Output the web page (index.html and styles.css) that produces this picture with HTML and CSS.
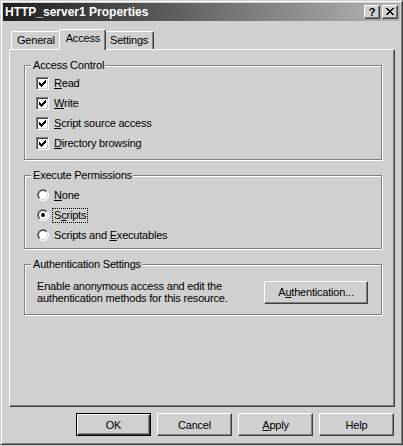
FILE: index.html
```html
<!DOCTYPE html>
<html>
<head>
<meta charset="utf-8">
<title>HTTP_server1 Properties</title>
<link rel="stylesheet" href="styles.css">
</head>
<body>
<div class="window">
  <div class="titlebar">
    <span class="title">HTTP_server1 Properties</span>
    <div class="tbtns">
      <span class="tbtn help">?</span>
      <span class="tbtn close"><svg width="8" height="7" viewBox="0 0 8 7" shape-rendering="crispEdges"><path d="M0 0h2v1H0zM6 0h2v1H6zM1 1h2v1H1zM5 1h2v1H5zM2 2h4v1H2zM3 3h2v1H3zM2 4h4v1H2zM1 5h2v1H1zM5 5h2v1H5zM0 6h2v1H0zM6 6h2v1H6z" fill="#000"/></svg></span>
    </div>
  </div>
  <div class="content">
    <div class="tabs">
      <div class="tab">General</div>
      <div class="tab active">Access</div>
      <div class="tab">Settings</div>
    </div>
    <div class="panel">
      <fieldset class="group g-access">
        <legend>Access Control</legend>
        <div class="row"><span class="cb"><svg width="9" height="9" viewBox="0 0 9 9" shape-rendering="crispEdges"><path d="M1 3h1v3H1zM2 4h1v3H2zM3 5h1v3H3zM4 4h1v3H4zM5 3h1v3H5zM6 2h1v3H6zM7 1h1v3H7z" fill="#000"/></svg></span><span class="lbl"><u>R</u>ead</span></div>
        <div class="row"><span class="cb"><svg width="9" height="9" viewBox="0 0 9 9" shape-rendering="crispEdges"><path d="M1 3h1v3H1zM2 4h1v3H2zM3 5h1v3H3zM4 4h1v3H4zM5 3h1v3H5zM6 2h1v3H6zM7 1h1v3H7z" fill="#000"/></svg></span><span class="lbl"><u>W</u>rite</span></div>
        <div class="row"><span class="cb"><svg width="9" height="9" viewBox="0 0 9 9" shape-rendering="crispEdges"><path d="M1 3h1v3H1zM2 4h1v3H2zM3 5h1v3H3zM4 4h1v3H4zM5 3h1v3H5zM6 2h1v3H6zM7 1h1v3H7z" fill="#000"/></svg></span><span class="lbl"><u>S</u>cript source access</span></div>
        <div class="row"><span class="cb"><svg width="9" height="9" viewBox="0 0 9 9" shape-rendering="crispEdges"><path d="M1 3h1v3H1zM2 4h1v3H2zM3 5h1v3H3zM4 4h1v3H4zM5 3h1v3H5zM6 2h1v3H6zM7 1h1v3H7z" fill="#000"/></svg></span><span class="lbl"><u>D</u>irectory browsing</span></div>
      </fieldset>

      <fieldset class="group g-exec">
        <legend>Execute Permissions</legend>
        <div class="row"><span class="rb"><svg width="12" height="12" viewBox="0 0 12 12"><defs><linearGradient id="go" x1="0" y1="0" x2="1" y2="1"><stop offset="0.5" stop-color="#808080"/><stop offset="0.5" stop-color="#ffffff"/></linearGradient><linearGradient id="gi" x1="0" y1="0" x2="1" y2="1"><stop offset="0.5" stop-color="#404040"/><stop offset="0.5" stop-color="#d0d0d0"/></linearGradient></defs><circle cx="6" cy="6" r="6" fill="url(#go)"/><circle cx="6" cy="6" r="5" fill="url(#gi)"/><circle cx="6" cy="6" r="4" fill="#fff"/></svg></span><span class="lbl"><u>N</u>one</span></div>
        <div class="row"><span class="rb"><svg width="12" height="12" viewBox="0 0 12 12"><circle cx="6" cy="6" r="6" fill="url(#go)"/><circle cx="6" cy="6" r="5" fill="url(#gi)"/><circle cx="6" cy="6" r="4" fill="#fff"/><circle cx="6" cy="6" r="2" fill="#000"/></svg></span><span class="lbl focus">S<u>c</u>ripts</span></div>
        <div class="row"><span class="rb"><svg width="12" height="12" viewBox="0 0 12 12"><circle cx="6" cy="6" r="6" fill="url(#go)"/><circle cx="6" cy="6" r="5" fill="url(#gi)"/><circle cx="6" cy="6" r="4" fill="#fff"/></svg></span><span class="lbl">Scripts and <u>E</u>xecutables</span></div>
      </fieldset>

      <fieldset class="group g-auth">
        <legend>Authentication Settings</legend>
        <div class="auth-row">
          <p class="auth-text">Enable anonymous access and edit the<br>authentication methods for this resource.</p>
          <button class="btn auth-btn" type="button">A<u>u</u>thentication...</button>
        </div>
      </fieldset>
    </div>
    <div class="buttons">
      <button class="btn default" type="button">OK</button>
      <button class="btn" type="button">Cancel</button>
      <button class="btn" type="button"><u>A</u>pply</button>
      <button class="btn" type="button">Help</button>
    </div>
  </div>
</div>
</body>
</html>
```
FILE: styles.css
```css
* { box-sizing: border-box; }
html, body { margin: 0; padding: 0; }
body {
  background: #d0d0d0;
  font-family: "Liberation Sans", Arial, sans-serif;
  font-size: 11px;
  letter-spacing: -0.2px;
  color: #000;
}
.window {
  width: 403px;
  height: 445px;
  background: #d0d0d0;
  border: 1px solid;
  border-color: #d0d0d0 #404040 #404040 #d0d0d0;
  box-shadow: inset 1px 1px 0 #fff, inset -1px -1px 0 #808080;
  padding: 2px;
  display: flex;
  flex-direction: column;
}
.titlebar {
  height: 18px;
  background: linear-gradient(to right, #1e1e1e 0%, #5a5a5a 40%, #b6b6b6 100%);
  display: flex;
  align-items: center;
  justify-content: space-between;
  padding: 0 2px 0 2px;
}
.title {
  color: #fff;
  font-weight: bold;
  font-size: 12px;
  letter-spacing: 0;
}
.tbtns { display: flex; gap: 2px; }
.tbtn {
  width: 16px;
  height: 14px;
  background: #d0d0d0;
  border: 1px solid;
  border-color: #fff #404040 #404040 #fff;
  box-shadow: inset -1px -1px 0 #808080;
  display: flex;
  align-items: center;
  justify-content: center;
}
.tbtn.help {
  font-weight: bold;
  font-size: 11px;
  line-height: 12px;
  letter-spacing: 0;
  padding-bottom: 1px;
}
.tbtn.close svg { margin-bottom: 1px; }
.content {
  flex: 1;
  display: flex;
  flex-direction: column;
  padding: 8px 5px 0 6px;
}
.tabs {
  display: flex;
  align-items: flex-end;
  height: 20px;
  padding-left: 2px;
}
.tab {
  height: 18px;
  padding: 0 5px;
  line-height: 16px;
  border-top: 1px solid #fff;
  border-left: 1px solid #fff;
  border-right: 1px solid #404040;
  box-shadow: inset -1px 0 0 #808080;
  border-top-left-radius: 2px;
  border-top-right-radius: 2px;
  background: #d0d0d0;
}
.tab.active {
  height: 21px;
  margin: 0 -2px -1px;
  padding: 0 5px 0 6px;
  line-height: 17px;
  position: relative;
  z-index: 1;
}
.panel {
  height: 358px;
  border: 1px solid;
  border-color: #fff #404040 #404040 #fff;
  box-shadow: inset -1px -1px 0 #808080;
  padding: 9px 12px 0 14px;
  display: flex;
  flex-direction: column;
  gap: 9px;
}
.group {
  margin: 0;
  min-width: 0;
  border: 1px solid #808080;
  box-shadow: 1px 1px 0 #fff, inset 1px 1px 0 #fff;
  padding: 0 10px 0 11px;
}
.group legend {
  margin-left: -5px;
  padding: 0 1px 0 2px;
  line-height: 13px;
  background: #d0d0d0;
}
.g-access { padding-bottom: 6px; }
.g-access .row:first-of-type { margin-top: 1px; }
.g-exec { padding-bottom: 3px; }
.g-exec .row:first-of-type { margin-top: 3px; }
.g-auth { padding-bottom: 10px; }
.row {
  height: 20px;
  display: flex;
  align-items: center;
}
.cb {
  width: 13px;
  height: 13px;
  flex: none;
  background: #fff;
  border: 1px solid;
  border-color: #808080 #fff #fff #808080;
  box-shadow: inset 1px 1px 0 #404040, inset -1px -1px 0 #d0d0d0;
  padding: 1px;
  display: flex;
  margin-right: 5px;
}
.cb svg { display: block; }
.rb {
  width: 12px;
  height: 12px;
  flex: none;
  margin: 0 5px 0 1px;
  display: flex;
}
.rb svg { display: block; }
.lbl { line-height: 13px; }
.lbl.focus {
  outline: 1px dotted #000;
  outline-offset: 0;
  padding: 0 1px;
  margin-left: -1px;
}
u { text-decoration-thickness: 1px; text-underline-offset: 1px; }
.auth-row {
  margin-top: 9px;
  display: flex;
  align-items: center;
  justify-content: space-between;
  padding-right: 3px;
}
.auth-text {
  margin: 0 0 0 1px;
  line-height: 12px;
}
.btn {
  appearance: none;
  margin: 0;
  width: 75px;
  height: 23px;
  padding: 0;
  font: inherit;
  letter-spacing: inherit;
  color: #000;
  background: #d0d0d0;
  border: 1px solid;
  border-color: #fff #404040 #404040 #fff;
  box-shadow: inset -1px -1px 0 #808080;
  display: flex;
  align-items: center;
  justify-content: center;
}
.btn.default {
  border-color: #000;
  box-shadow: inset 1px 1px 0 #fff, inset -1px -1px 0 #404040, inset -2px -2px 0 #808080;
}
.auth-btn { width: 104px; }
.buttons {
  margin-top: 6px;
  display: flex;
  justify-content: flex-end;
  gap: 6px;
  padding-right: 1px;
}
```
